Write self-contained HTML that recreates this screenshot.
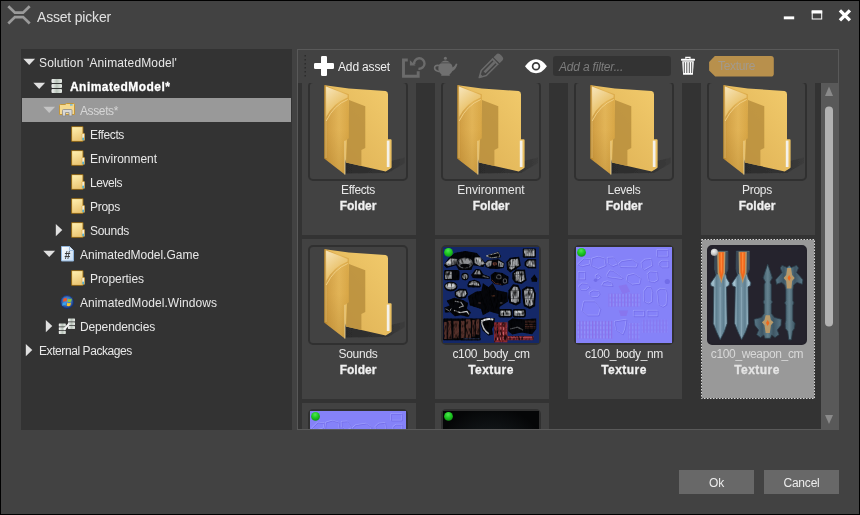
<!DOCTYPE html>
<html>
<head>
<meta charset="utf-8">
<title>Asset picker</title>
<style>
*{box-sizing:border-box;margin:0;padding:0}
html,body{width:860px;height:515px;overflow:hidden;background:#000}
body{font-family:"Liberation Sans",sans-serif;font-size:12px;color:#e6e6e6;position:relative}
.abs{position:absolute}
#win{position:absolute;left:0;top:0;width:860px;height:515px;background:#424242;border:1px solid #000}
#title{position:absolute;left:37px;top:8px;font-size:14px;line-height:18px;letter-spacing:-0.19px;color:#e0e0e0;white-space:pre}
#tree{position:absolute;left:21px;top:49px;width:271px;height:381px;background:#333}
.row{position:absolute;left:1px;width:269px;height:24px}
.row.sel{background:#999}
.row span{position:absolute;top:0;line-height:24px;white-space:pre;color:#e8e8e8}
.row svg{position:absolute}
#panel{position:absolute;left:297px;top:49px;width:542px;height:381px;background:#333;border:1px solid #595959;overflow:hidden}
#toolbar{position:absolute;left:0;top:0;width:540px;height:33px;background:#424242}
#grid{position:absolute;left:0;top:33px;width:523px;height:346px;overflow:hidden}
.tile{position:absolute;width:114px;height:160px;background:#424242}
.tile.sel{background:#999}
.tile.sel .frame{border-color:#24222b;background:#25232d}
.frame{position:absolute;left:6px;top:6px;width:100px;height:100px;border:2px solid #303030;border-radius:5px}
.frame svg{position:absolute;left:0;top:0}
.nm{position:absolute;left:-1px;width:114px;top:107px;text-align:center;line-height:16px;color:#e8e8e8;white-space:pre}
.ty{position:absolute;left:-1px;width:114px;top:123px;text-align:center;line-height:16px;font-weight:bold;color:#f0f0f0;white-space:pre;-webkit-text-stroke:0.3px #f0f0f0}
.tx{position:absolute;margin-top:1px;line-height:24px;white-space:pre;color:#e8e8e8}
.btn{position:absolute;top:470px;width:75px;height:24px;background:#686868;text-align:center;line-height:26px;font-size:12px;letter-spacing:-0.2px;color:#ececec}
</style>
</head>
<body>
<div id="root" style="position:absolute;left:0;top:0;width:860px;height:515px;will-change:transform">
<svg width="0" height="0" style="position:absolute">
<defs>
<linearGradient id="gFs" x1="0" y1="0" x2="0.3" y2="1"><stop offset="0" stop-color="#fff0b0"/><stop offset="1" stop-color="#ecc877"/></linearGradient>
<linearGradient id="gDb" x1="0" y1="0" x2="1" y2="0"><stop offset="0" stop-color="#f4f4f4"/><stop offset="0.5" stop-color="#b9c4ba"/><stop offset="1" stop-color="#e8ece8"/></linearGradient>
<radialGradient id="gWin" cx="0.5" cy="0.4" r="0.6"><stop offset="0" stop-color="#5aa0e8"/><stop offset="1" stop-color="#1a3c8c"/></radialGradient>
<linearGradient id="gCs" x1="0" y1="0" x2="1" y2="1"><stop offset="0" stop-color="#ffffff"/><stop offset="1" stop-color="#c4dcf4"/></linearGradient>
</defs>
<symbol id="fs" viewBox="0 0 14 16">
 <rect x="0.2" y="0.2" width="12.2" height="15.6" rx="0.8" fill="#a67616"/>
 <rect x="1.1" y="1.1" width="10.4" height="13.8" fill="url(#gFs)"/>
 <path d="M10.6 8.2Q10.8 7.2 12 7.2H13.2Q13.8 7.2 13.8 8V14.6H10.6Z" fill="#e2b85c"/>
 <rect x="11.5" y="8" width="1.3" height="4" fill="#fbfbf6"/>
 <rect x="11.5" y="11.6" width="1.3" height="2.6" fill="#2fb0f4"/>
</symbol>
<symbol id="db" viewBox="0 0 12 16">
 <rect x="0.5" y="1" width="10.5" height="4" rx="1" fill="url(#gDb)"/>
 <rect x="0.5" y="6" width="10.5" height="4" rx="1" fill="url(#gDb)"/>
 <rect x="0.5" y="11" width="10.5" height="4" rx="1" fill="url(#gDb)"/>
</symbol>
<symbol id="assets" viewBox="0 0 16 14">
 <path d="M0.5 2.5Q0.5 1.5 1.5 1.5H6L7.5 0.5H14.5Q15.5 0.5 15.5 1.5V11.5H0.5Z" fill="#f5d98f" stroke="#c2953a"/>
 <rect x="11" y="1.3" width="2.6" height="1.2" fill="#4db2f0"/>
 <path d="M3.5 13V7.5Q3.5 6.5 4.5 6.5H12Q13 6.5 13 7.5V13H10V9.5H6.5V13Z" fill="#d8d8d8" stroke="#8a8a8a" stroke-width="0.8"/>
</symbol>
<symbol id="cs" viewBox="0 0 13 16">
 <path d="M0.5 0.5H8.5L12.5 4.5V15H0.5Z" fill="url(#gCs)" stroke="#8fb4dc"/>
 <path d="M8.5 0.5V4.5H12.5" fill="#e8f2fc" stroke="#8fb4dc" stroke-width="0.8"/>
 <text x="6.3" y="12.6" font-family="Liberation Sans, sans-serif" font-size="10.5" font-weight="bold" text-anchor="middle" fill="#3c3c3c">#</text>
</symbol>
<symbol id="wglobe" viewBox="0 0 14 14">
 <circle cx="7" cy="7" r="6.7" fill="url(#gWin)"/>
 <circle cx="7" cy="7" r="6.4" fill="none" stroke="#12265e" stroke-width="0.7"/>
 <g transform="translate(7 7.2) scale(1.18) translate(-6.6 -7.3)">
 <path d="M3.6 4.4Q5.2 3.4 6.7 4.2L6.2 6.8Q4.7 6.1 3.1 7Z" fill="#f0582a"/>
 <path d="M7.5 4.4Q9 5.1 10.7 4.2L10.2 6.8Q8.6 7.6 7 6.9Z" fill="#8cc63e"/>
 <path d="M2.9 7.8Q4.5 6.9 6 7.6L5.5 10.2Q4 9.5 2.4 10.4Z" fill="#3aa0e8"/>
 <path d="M6.8 7.8Q8.4 8.5 10 7.6L9.5 10.2Q7.9 11 6.3 10.3Z" fill="#fcc42a"/>
 </g>
</symbol>
<symbol id="dep" viewBox="0 0 18 16">
 <g fill="url(#gDb)">
 <rect x="10" y="0.5" width="7" height="3" rx="0.6"/><rect x="10" y="4.2" width="7" height="3" rx="0.6"/><rect x="10" y="7.9" width="7" height="3" rx="0.6"/>
 <rect x="0.8" y="5.5" width="7" height="3" rx="0.6"/><rect x="0.8" y="9.2" width="7" height="3" rx="0.6"/><rect x="0.8" y="12.9" width="7" height="3" rx="0.6"/>
 </g>
 <path d="M6 11.5L11 6" stroke="#f4f4f4" stroke-width="2"/>
</symbol>
</defs>
</svg>
<svg width="0" height="0" style="position:absolute">
<defs>
<linearGradient id="gFlap" x1="0" y1="0" x2="1" y2="0"><stop offset="0" stop-color="#c08c32"/><stop offset="0.14" stop-color="#d6a448"/><stop offset="0.6" stop-color="#e6b85a"/><stop offset="1" stop-color="#dcaa48"/></linearGradient>
<linearGradient id="gFlapV" x1="0" y1="0" x2="0" y2="1"><stop offset="0" stop-color="#000" stop-opacity="0"/><stop offset="0.5" stop-color="#7a4a00" stop-opacity="0.04"/><stop offset="1" stop-color="#7a4a00" stop-opacity="0.22"/></linearGradient>
<linearGradient id="gBack" x1="0" y1="1" x2="1" y2="0"><stop offset="0" stop-color="#dcae52"/><stop offset="1" stop-color="#f2cb6c"/></linearGradient>
<linearGradient id="gGlare" x1="0" y1="0" x2="0.6" y2="1"><stop offset="0" stop-color="#f7e6bc"/><stop offset="0.6" stop-color="#ecc878"/><stop offset="1" stop-color="#e6ba5e"/></linearGradient>
<linearGradient id="gShadow" x1="0" y1="0" x2="1" y2="0"><stop offset="0" stop-color="#2c2c2c"/><stop offset="0.6" stop-color="#313131"/><stop offset="1" stop-color="#3c3c3c"/></linearGradient>
<filter id="bl1" x="-20%" y="-20%" width="140%" height="140%"><feGaussianBlur stdDeviation="0.6"/></filter>
</defs>
<symbol id="folder" viewBox="0 0 100 100" overflow="visible">
 <!-- ground shadow -->
 <path d="M38 82L83 80L97 76.5V82L80 92L38 92.5Z" fill="url(#gShadow)" filter="url(#bl1)"/>
 <!-- back -->
 <path d="M17 4.2L40.8 7.4L77.5 10Q80 10.5 80 13.2V58.3H82.6Q83.6 58.3 83.6 59.3V86.6L82.5 87.6L77.7 90.4L37.9 81.6Z" fill="url(#gBack)"/>
 <!-- flap shadow on back -->
 <path d="M41 19L57.3 25.2V67L53.4 68.9V85L38 81.6Z" fill="#b98f3e" opacity="0.85" filter="url(#bl1)"/>
 <!-- paper -->
 <path d="M78.8 59.6H81.5V86H78.8Z" fill="#f4f1ea"/>
 <!-- front flap -->
 <path d="M16.5 3.9L40.8 13.2V57.3L36.9 59.8V93.6L16.5 77.7Z" fill="url(#gFlap)"/>
 <path d="M16.5 3.9L40.8 13.2V57.3L36.9 59.8V93.6L16.5 77.7Z" fill="url(#gFlapV)"/>
 <path d="M18 5.6L39.6 13.9V16.5Q25 22 18.3 36Z" fill="url(#gGlare)"/>
 <path d="M39.8 18.5Q26 24 18.2 40" fill="none" stroke="#f0d189" stroke-width="0.9"/>
 <path d="M36.9 59.8V93.6" stroke="#f3dca0" stroke-width="0.8"/>
 <path d="M16.9 4.3V77.5" stroke="#c08f33" stroke-width="0.9"/>
 <path d="M18 5.5V77" stroke="#f3d99a" stroke-width="0.6" opacity="0.8"/>
</symbol>
</defs>
</svg>
<svg width="0" height="0" style="position:absolute">
<defs>
<pattern id="pStr" width="2.2" height="8" patternUnits="userSpaceOnUse"><rect width="2.2" height="8" fill="#77797c"/><rect width="1.1" height="8" fill="#b5b7ba"/><rect y="3" width="2.2" height="1" fill="#55575a" opacity="0.6"/></pattern>
<pattern id="pRed" width="3" height="5" patternUnits="userSpaceOnUse"><rect width="3" height="5" fill="#8c2a30"/><rect width="1" height="3" fill="#c06068"/><rect x="1.6" y="2.5" width="0.8" height="2.5" fill="#50141a"/></pattern>
<pattern id="pBrown" width="10" height="2.4" patternUnits="userSpaceOnUse"><rect width="10" height="2.4" fill="#0a0808"/><rect width="10" height="1.1" fill="#4e2a24"/></pattern>
<pattern id="pNm" width="3.2" height="4.6" patternUnits="userSpaceOnUse"><rect width="3.2" height="4.6" fill="#8582f8"/><rect width="1.2" height="4.6" fill="#8c6ee6"/><rect x="1.9" y="1" width="0.8" height="3" fill="#9ea0ff"/></pattern>
<radialGradient id="gGreen" cx="0.45" cy="0.3" r="0.75"><stop offset="0" stop-color="#52e452"/><stop offset="0.45" stop-color="#1fcc24"/><stop offset="1" stop-color="#0f8c12"/></radialGradient>
<radialGradient id="gGrey" cx="0.4" cy="0.35" r="0.7"><stop offset="0" stop-color="#f4f4f4"/><stop offset="0.6" stop-color="#c8c8c8"/><stop offset="1" stop-color="#8a8a8a"/></radialGradient>
<radialGradient id="gDarkTex" cx="0.5" cy="0.55" r="0.6"><stop offset="0" stop-color="#232a2d"/><stop offset="0.7" stop-color="#0d1012"/><stop offset="1" stop-color="#050607"/></radialGradient>
<linearGradient id="gBlade" x1="0" y1="0" x2="1" y2="0"><stop offset="0" stop-color="#88a8b8"/><stop offset="0.14" stop-color="#a4c2d0"/><stop offset="0.3" stop-color="#5f7f90"/><stop offset="0.5" stop-color="#7896a6"/><stop offset="0.7" stop-color="#5f7f90"/><stop offset="0.86" stop-color="#a4c2d0"/><stop offset="1" stop-color="#88a8b8"/></linearGradient>
<linearGradient id="gMace1" x1="0" y1="0" x2="1" y2="0"><stop offset="0" stop-color="#5a7888"/><stop offset="0.3" stop-color="#3e5664"/><stop offset="0.5" stop-color="#64828f"/><stop offset="0.7" stop-color="#3e5664"/><stop offset="1" stop-color="#5a7888"/></linearGradient>
<linearGradient id="gMace2" x1="0" y1="0" x2="1" y2="0"><stop offset="0" stop-color="#5a7888"/><stop offset="0.3" stop-color="#3e5664"/><stop offset="0.5" stop-color="#64828f"/><stop offset="0.7" stop-color="#3e5664"/><stop offset="1" stop-color="#5a7888"/></linearGradient>
<filter id="blW" x="-5%" y="-5%" width="110%" height="110%"><feGaussianBlur stdDeviation="0.4"/></filter>
<filter id="blT" x="0" y="0" width="100%" height="100%" color-interpolation-filters="sRGB"><feGaussianBlur in="SourceGraphic" stdDeviation="0.45" result="b"/><feTurbulence type="fractalNoise" baseFrequency="0.5 0.16" numOctaves="2" seed="7" result="n"/><feColorMatrix in="n" type="matrix" values="0 0 0 0 0  0 0 0 0 0  0 0 0 0 0  0 0 0 -2.6 1.45" result="na"/><feComposite in="na" in2="b" operator="in" result="nc"/><feMerge><feMergeNode in="b"/><feMergeNode in="nc"/></feMerge></filter>
<filter id="blN" x="-5%" y="-5%" width="110%" height="110%"><feGaussianBlur stdDeviation="0.35"/></filter>
</defs>
<symbol id="bodycm" viewBox="0 0 96 96"><rect width="96" height="96" fill="#142868"/>
 <g filter="url(#blT)">
 <path d="M0.9 18.3 L5.2 11.6 L11.6 6.0 L22.4 4.1 L33.9 6.0 L42.5 16.0 L40.3 20.1 L30.2 18.3 L28.3 23.1 L15.7 23.1 L13.0 18.3 L3.7 20.9Z" fill="#05060a" />
 <path d="M1.5 17.1 L7.5 11.2 L14.2 11.9 L13.4 17.1 L5.6 19.0Z" fill="#8d8f92" />
 <path d="M2.6 16.4 L7.8 11.9 L11.2 12.3 L7.5 16.8Z" fill="#c8cacc" />
 <ellipse cx="22.0" cy="16.0" rx="7.8" ry="5.6" fill="#5a5c60" />
 <ellipse cx="22.0" cy="14.5" rx="5.6" ry="3.0" fill="#8d8f92" />
 <ellipse cx="22.0" cy="18.6" rx="4.8" ry="1.9" fill="#05060a" />
 <path d="M31.3 10.4 L37.3 10.1 L41.8 16.8 L36.5 19.0 L31.7 16.0Z" fill="#8d8f92" />
 <path d="M33.6 11.2 L36.9 11.2 L39.9 16.4 L36.9 17.5Z" fill="#c8cacc" />
 <path d="M42.5 8.9 L55.5 4.5 L58.2 9.7 L55.9 11.2 L48.8 11.6Z" fill="#05060a" />
 <path d="M43.2 8.9 L55.2 5.6 L57.0 9.7 L48.8 10.8Z" fill="none" stroke="#c8cacc" stroke-width="0.7"/>
 <path d="M41.8 16.0 L44.7 13.0 L55.9 12.3 L61.5 16.0 L60.8 20.9 L54.1 22.0 L46.6 21.6 L42.5 20.1Z" fill="#05060a" />
 <path d="M42.5 16.4 L45.5 13.8 L48.8 13.8 L48.1 19.4 L44.0 19.8Z" fill="#8d8f92" />
 <path d="M55.2 13.4 L60.8 16.4 L60.0 20.1 L55.2 19.8Z" fill="#8d8f92" />
 <ellipse cx="51.8" cy="16.8" rx="2.2" ry="1.9" fill="#6a3a30" />
 <path d="M63.4 14.9 L67.1 10.8 L76.1 9.7 L77.9 18.6 L73.1 22.0 L67.1 25.4 L64.1 22.4Z" fill="#05060a" />
 <path d="M65.2 15.3 L68.2 12.3 L74.9 11.6 L76.1 18.3 L68.2 22.7 L66.0 20.9Z" fill="url(#pStr)" />
 <rect x="79.8" y="1.5" width="13.0" height="9.3" rx="1.1" fill="#05060a" />
 <rect x="80.9" y="2.6" width="10.8" height="6.7" rx="0.7" fill="url(#pStr)" />
 <path d="M81.6 14.9 L85.0 11.9 L93.2 12.3 L93.2 21.6 L85.0 21.3 L81.6 18.6Z" fill="#05060a" />
 <path d="M83.1 15.3 L85.7 13.4 L92.1 13.4 L92.1 20.1 L85.7 20.1 L83.1 18.3Z" fill="url(#pStr)" />
 <path d="M69.3 26.1 L73.1 22.4 L82.0 22.7 L83.5 33.6 L78.3 36.9 L71.6 35.4 L69.3 31.7Z" fill="#05060a" />
 <path d="M71.2 26.5 L73.8 24.2 L80.9 24.6 L81.6 32.8 L77.9 35.0 L72.7 33.9Z" fill="url(#pStr)" />
 <path d="M88.4 31.3 L91.3 27.6 L94.3 31.7 L93.9 34.7 L88.7 34.7Z" fill="#05060a" />
 <rect x="1.1" y="23.1" width="15.3" height="10.1" rx="1.5" fill="#05060a" />
 <rect x="2.2" y="24.6" width="6.7" height="7.5" rx="0.9" fill="url(#pStr)" />
 <ellipse cx="22.0" cy="29.5" rx="3.7" ry="3.7" fill="#05060a" />
 <ellipse cx="22.0" cy="29.5" rx="2.6" ry="2.6" fill="#8d8f92" />
 <path d="M28.0 28.0 L32.8 22.0 L37.3 22.4 L40.3 27.2 L47.0 29.8 L46.6 32.1 L29.8 30.9Z" fill="#05060a" />
 <path d="M30.9 27.2 L33.6 23.1 L36.5 23.5 L38.4 27.6Z" fill="#8d8f92" />
 <path d="M39.9 28.0 L45.9 30.2 L45.5 31.3 L39.5 29.8Z" fill="#5a5c60" />
 <path d="M47.7 28.0 L51.8 25.0 L59.3 26.1 L65.6 29.8 L65.2 36.5 L59.3 38.4 L51.4 36.9 L48.1 33.6Z" fill="#05060a" />
 <ellipse cx="55.9" cy="29.8" rx="3.0" ry="2.6" fill="#5a5c60" />
 <ellipse cx="61.9" cy="33.9" rx="2.2" ry="2.6" fill="#5a5c60" />
 <ellipse cx="55.9" cy="29.8" rx="1.7" ry="1.5" fill="#05060a" />
 <ellipse cx="61.9" cy="33.9" rx="1.3" ry="1.7" fill="#05060a" />
 <path d="M48.8 32.8 L52.2 36.5 L58.2 37.3" fill="none" stroke="#70382e" stroke-width="0.8"/>
 <path d="M24.2 38.0 L26.1 34.3 L31.3 32.8 L36.5 34.7 L38.0 39.1 L36.9 40.6 L25.0 40.3Z" fill="#05060a" />
 <path d="M25.7 38.0 L27.2 35.0 L31.3 33.9 L35.4 35.4 L36.5 38.8Z" fill="url(#pStr)" />
 <ellipse cx="7.8" cy="39.5" rx="6.7" ry="4.8" fill="#05060a" />
 <ellipse cx="7.8" cy="39.1" rx="5.6" ry="3.4" fill="#8d8f92" />
 <ellipse cx="7.5" cy="38.4" rx="4.1" ry="1.7" fill="#c8cacc" />
 <path d="M11.6 44.7 L16.0 41.8 L23.1 42.1 L25.0 46.6 L22.7 51.1 L15.7 51.8 L11.9 49.2Z" fill="#05060a" />
 <path d="M13.4 45.1 L16.8 43.2 L22.4 43.6 L23.5 46.6 L21.6 49.6 L16.0 50.0 L13.4 48.1Z" fill="url(#pStr)" />
 <path d="M39.9 36.2 L45.5 40.3 L49.6 36.2 L53.3 42.9 L64.5 45.5 L64.9 54.4 L56.3 60.0 L57.0 67.5 L46.6 64.5 L39.9 68.2 L38.0 61.9 L26.8 58.2 L25.0 49.2 L32.8 44.7 L38.4 44.0Z" fill="#05060a" />
 <ellipse cx="50.3" cy="48.8" rx="1.9" ry="0.9" fill="#4a2a1e" />
 <ellipse cx="36.5" cy="55.9" rx="1.5" ry="0.9" fill="#3a2a2a" />
 <ellipse cx="58.2" cy="55.9" rx="1.5" ry="0.9" fill="#3a3a44" />
 <path d="M65.6 43.2 L70.1 37.3 L75.3 38.0 L77.9 44.0 L77.5 55.9 L73.1 58.5 L66.4 55.9 L64.9 50.0Z" fill="#05060a" />
 <path d="M67.5 44.0 L70.8 39.5 L74.6 39.9 L76.1 44.7 L75.7 54.4 L72.3 56.3 L67.9 54.4Z" fill="url(#pStr)" />
 <path d="M79.0 42.5 L83.5 39.5 L90.6 40.3 L92.8 46.6 L92.1 59.3 L86.9 61.9 L80.9 59.3 L79.4 50.3Z" fill="#05060a" />
 <path d="M80.9 43.6 L84.3 41.4 L89.5 42.1 L91.0 47.0 L90.2 57.4 L86.5 59.7 L82.4 57.4Z" fill="url(#pStr)" />
 <rect x="55.5" y="61.9" width="13.8" height="8.6" rx="1.9" fill="#05060a" />
 <rect x="57.4" y="63.4" width="10.4" height="5.6" rx="1.1" fill="#8d8f92" />
 <rect x="58.5" y="64.1" width="8.2" height="1.9" rx="0.7" fill="#c8cacc" />
 <rect x="69.7" y="61.9" width="13.0" height="8.6" rx="1.9" fill="#05060a" />
 <rect x="71.2" y="63.4" width="10.1" height="5.6" rx="1.1" fill="#8d8f92" />
 <rect x="72.3" y="64.1" width="7.8" height="1.9" rx="0.7" fill="#c8cacc" />
 <path d="M3.7 53.7 L11.2 50.7 L20.5 53.3 L25.0 55.9 L23.9 61.5 L28.0 65.6 L25.4 70.1 L17.9 68.2 L11.9 69.3 L7.5 65.2 L1.9 65.6 L1.5 60.4 L6.7 58.5Z" fill="#05060a" />
 <path d="M11.6 54.1 L17.9 55.2 L20.5 58.9 L15.7 60.8" fill="none" stroke="#8d8f92" stroke-width="1.2"/>
 <path d="M10.8 63.4 L17.1 65.6 L23.9 64.5 L26.1 67.5" fill="none" stroke="#c8cacc" stroke-width="1.2"/>
 <path d="M2.6 61.9 L6.7 64.1 L8.2 61.5" fill="none" stroke="#8d8f92" stroke-width="1"/>
 <rect x="0.4" y="71.6" width="36.9" height="21.6" rx="0.6" fill="#05060a" />
 <rect x="1.1" y="74.9" width="2.6" height="17.1" rx="0.0" fill="#54302a" />
 <rect x="4.8" y="73.8" width="3.7" height="18.3" rx="0.0" fill="#54302a" />
 <rect x="10.4" y="73.8" width="5.6" height="17.5" rx="0.0" fill="#54302a" />
 <rect x="17.9" y="73.8" width="3.7" height="17.5" rx="0.0" fill="#54302a" />
 <rect x="22.7" y="72.3" width="5.2" height="18.6" rx="0.0" fill="#54302a" />
 <rect x="29.1" y="73.1" width="2.6" height="16.4" rx="0.0" fill="#54302a" />
 <rect x="32.8" y="72.3" width="3.4" height="15.3" rx="0.0" fill="#54302a" />
 <rect x="18.6" y="91.0" width="19.0" height="2.2" rx="0.0" fill="#05060a" />
 <rect x="20.5" y="91.5" width="16.0" height="0.7" rx="0.0" fill="#3a4a7a" />
 <path d="M36.9 71.6 L42.9 70.5 L51.8 71.2 L51.4 78.3 L48.8 82.0 L50.0 87.6 L45.5 88.4 L39.5 83.5 L37.3 76.8Z" fill="#05060a" />
 <path d="M38.4 74.2 Q44.7 70.8 50.3 72.7" fill="none" stroke="#e4e6e8" stroke-width="1.8"/>
 <path d="M38.8 74.6 Q39.1 82.0 45.9 86.9" fill="none" stroke="#b9bcc0" stroke-width="1.5"/>
 <rect x="51.1" y="75.3" width="13.4" height="20.1" rx="0.0" fill="#8c2a30" />
 <rect x="52.2" y="76.4" width="11.2" height="16.8" rx="0.0" fill="url(#pRed)" />
 <path d="M65.2 74.2 L69.3 71.6 L82.0 72.3 L93.2 71.6 L93.2 82.0 L89.1 87.2 L78.3 85.4 L69.3 87.6 L65.2 83.9Z" fill="#05060a" />
 <rect x="82.0" y="73.1" width="10.4" height="8.9" rx="0.0" fill="url(#pBrown)" />
 <path d="M67.1 82.0 L74.6 80.2 L80.2 83.1" fill="none" stroke="#5a5c60" stroke-width="1.2"/>
 <rect x="63.4" y="89.1" width="27.2" height="4.1" rx="0.6" fill="#7c2630" />
 <rect x="64.5" y="90.2" width="25.0" height="0.9" rx="0.4" fill="#b45058" />
 </g>
 <circle cx="5.5" cy="5.4" r="4.4" fill="url(#gGreen)"/>
</symbol>
<symbol id="bodynm" viewBox="0 0 96 96"><rect width="96" height="96" fill="#8582f8"/>
 <g filter="url(#blN)" opacity="0.95">
 <path d="M1.5 17.1 L7.5 11.2 L14.2 11.9 L13.4 17.1 L5.6 19.0Z" fill="#8683fa" stroke="#a4a6ff" stroke-width="0.8"/>
 <path d="M1.5 17.1 L7.5 11.2 L14.2 11.9 L13.4 17.1 L5.6 19.0Z" fill="none" stroke="#6a62e2" stroke-width="0.6" transform="translate(0.6,0.7)"/>
 <path d="M15.7 11.2 L22.0 9.3 L28.3 11.2 L29.5 18.6 L22.0 21.6 L14.9 18.6Z" fill="#8683fa" stroke="#a4a6ff" stroke-width="0.8"/>
 <path d="M15.7 11.2 L22.0 9.3 L28.3 11.2 L29.5 18.6 L22.0 21.6 L14.9 18.6Z" fill="none" stroke="#6a62e2" stroke-width="0.6" transform="translate(0.6,0.7)"/>
 <path d="M31.3 10.4 L37.3 10.1 L41.8 16.8 L36.5 19.0 L31.7 16.0Z" fill="#8683fa" stroke="#a4a6ff" stroke-width="0.8"/>
 <path d="M31.3 10.4 L37.3 10.1 L41.8 16.8 L36.5 19.0 L31.7 16.0Z" fill="none" stroke="#6a62e2" stroke-width="0.6" transform="translate(0.6,0.7)"/>
 <path d="M42.5 16.4 L45.5 13.8 L55.9 12.3 L61.5 16.0 L60.0 20.1 L44.0 19.8Z" fill="#8683fa" stroke="#a4a6ff" stroke-width="0.8"/>
 <path d="M42.5 16.4 L45.5 13.8 L55.9 12.3 L61.5 16.0 L60.0 20.1 L44.0 19.8Z" fill="none" stroke="#6a62e2" stroke-width="0.6" transform="translate(0.6,0.7)"/>
 <path d="M65.2 15.3 L68.2 12.3 L74.9 11.6 L76.1 18.3 L68.2 22.7 L66.0 20.9Z" fill="#8683fa" stroke="#a4a6ff" stroke-width="0.8"/>
 <path d="M65.2 15.3 L68.2 12.3 L74.9 11.6 L76.1 18.3 L68.2 22.7 L66.0 20.9Z" fill="none" stroke="#6a62e2" stroke-width="0.6" transform="translate(0.6,0.7)"/>
 <path d="M80.9 2.6 L91.7 2.6 L91.7 9.3 L80.9 9.3Z" fill="#8683fa" stroke="#a4a6ff" stroke-width="0.8"/>
 <path d="M80.9 2.6 L91.7 2.6 L91.7 9.3 L80.9 9.3Z" fill="none" stroke="#6a62e2" stroke-width="0.6" transform="translate(0.6,0.7)"/>
 <path d="M83.1 15.3 L85.7 13.4 L92.1 13.4 L92.1 20.1 L85.7 20.1 L83.1 18.3Z" fill="#8683fa" stroke="#a4a6ff" stroke-width="0.8"/>
 <path d="M83.1 15.3 L85.7 13.4 L92.1 13.4 L92.1 20.1 L85.7 20.1 L83.1 18.3Z" fill="none" stroke="#6a62e2" stroke-width="0.6" transform="translate(0.6,0.7)"/>
 <path d="M71.2 26.5 L73.8 24.2 L80.9 24.6 L81.6 32.8 L77.9 35.0 L72.7 33.9Z" fill="#8683fa" stroke="#a4a6ff" stroke-width="0.8"/>
 <path d="M71.2 26.5 L73.8 24.2 L80.9 24.6 L81.6 32.8 L77.9 35.0 L72.7 33.9Z" fill="none" stroke="#6a62e2" stroke-width="0.6" transform="translate(0.6,0.7)"/>
 <path d="M2.2 24.6 L8.9 24.6 L8.9 32.1 L2.2 32.1Z" fill="#8683fa" stroke="#a4a6ff" stroke-width="0.8"/>
 <path d="M2.2 24.6 L8.9 24.6 L8.9 32.1 L2.2 32.1Z" fill="none" stroke="#6a62e2" stroke-width="0.6" transform="translate(0.6,0.7)"/>
 <path d="M19.4 28.0 L22.0 26.8 L24.6 29.5 L22.0 32.1 L19.4 30.9Z" fill="#8683fa" stroke="#a4a6ff" stroke-width="0.8"/>
 <path d="M19.4 28.0 L22.0 26.8 L24.6 29.5 L22.0 32.1 L19.4 30.9Z" fill="none" stroke="#6a62e2" stroke-width="0.6" transform="translate(0.6,0.7)"/>
 <path d="M30.9 27.2 L33.6 23.1 L36.5 23.5 L46.6 30.6 L45.5 31.7 L31.3 29.8Z" fill="#8683fa" stroke="#a4a6ff" stroke-width="0.8"/>
 <path d="M30.9 27.2 L33.6 23.1 L36.5 23.5 L46.6 30.6 L45.5 31.7 L31.3 29.8Z" fill="none" stroke="#6a62e2" stroke-width="0.6" transform="translate(0.6,0.7)"/>
 <path d="M51.4 28.0 L57.8 26.5 L64.5 30.9 L63.4 36.5 L55.9 37.3 L50.3 33.6Z" fill="#8683fa" stroke="#a4a6ff" stroke-width="0.8"/>
 <path d="M51.4 28.0 L57.8 26.5 L64.5 30.9 L63.4 36.5 L55.9 37.3 L50.3 33.6Z" fill="none" stroke="#6a62e2" stroke-width="0.6" transform="translate(0.6,0.7)"/>
 <path d="M25.7 38.0 L27.2 35.0 L31.3 33.9 L35.4 35.4 L36.5 38.8Z" fill="#8683fa" stroke="#a4a6ff" stroke-width="0.8"/>
 <path d="M25.7 38.0 L27.2 35.0 L31.3 33.9 L35.4 35.4 L36.5 38.8Z" fill="none" stroke="#6a62e2" stroke-width="0.6" transform="translate(0.6,0.7)"/>
 <path d="M2.2 39.1 L5.6 36.2 L11.2 36.5 L13.4 39.5 L10.4 42.5 L4.5 42.5Z" fill="#8683fa" stroke="#a4a6ff" stroke-width="0.8"/>
 <path d="M2.2 39.1 L5.6 36.2 L11.2 36.5 L13.4 39.5 L10.4 42.5 L4.5 42.5Z" fill="none" stroke="#6a62e2" stroke-width="0.6" transform="translate(0.6,0.7)"/>
 <path d="M13.4 45.1 L16.8 43.2 L22.4 43.6 L23.5 46.6 L21.6 49.6 L16.0 50.0 L13.4 48.1Z" fill="#8683fa" stroke="#a4a6ff" stroke-width="0.8"/>
 <path d="M13.4 45.1 L16.8 43.2 L22.4 43.6 L23.5 46.6 L21.6 49.6 L16.0 50.0 L13.4 48.1Z" fill="none" stroke="#6a62e2" stroke-width="0.6" transform="translate(0.6,0.7)"/>
 <path d="M67.5 44.0 L70.8 39.5 L74.6 39.9 L76.1 44.7 L75.7 54.4 L72.3 56.3 L67.9 54.4Z" fill="#8683fa" stroke="#a4a6ff" stroke-width="0.8"/>
 <path d="M67.5 44.0 L70.8 39.5 L74.6 39.9 L76.1 44.7 L75.7 54.4 L72.3 56.3 L67.9 54.4Z" fill="none" stroke="#6a62e2" stroke-width="0.6" transform="translate(0.6,0.7)"/>
 <path d="M80.9 43.6 L84.3 41.4 L89.5 42.1 L91.0 47.0 L90.2 57.4 L86.5 59.7 L82.4 57.4Z" fill="#8683fa" stroke="#a4a6ff" stroke-width="0.8"/>
 <path d="M80.9 43.6 L84.3 41.4 L89.5 42.1 L91.0 47.0 L90.2 57.4 L86.5 59.7 L82.4 57.4Z" fill="none" stroke="#6a62e2" stroke-width="0.6" transform="translate(0.6,0.7)"/>
 <path d="M57.4 63.4 L67.9 63.4 L67.9 69.0 L57.4 69.0Z" fill="#8683fa" stroke="#a4a6ff" stroke-width="0.8"/>
 <path d="M57.4 63.4 L67.9 63.4 L67.9 69.0 L57.4 69.0Z" fill="none" stroke="#6a62e2" stroke-width="0.6" transform="translate(0.6,0.7)"/>
 <path d="M71.2 63.4 L81.3 63.4 L81.3 69.0 L71.2 69.0Z" fill="#8683fa" stroke="#a4a6ff" stroke-width="0.8"/>
 <path d="M71.2 63.4 L81.3 63.4 L81.3 69.0 L71.2 69.0Z" fill="none" stroke="#6a62e2" stroke-width="0.6" transform="translate(0.6,0.7)"/>
 <path d="M38.4 74.2 L50.3 72.3 L48.8 82.0 L46.6 87.2 L39.9 82.8Z" fill="#8683fa" stroke="#a4a6ff" stroke-width="0.8"/>
 <path d="M38.4 74.2 L50.3 72.3 L48.8 82.0 L46.6 87.2 L39.9 82.8Z" fill="none" stroke="#6a62e2" stroke-width="0.6" transform="translate(0.6,0.7)"/>
 <path d="M7.5 54.1 L18.6 54.1 L24.2 61.5 L22.4 68.2 L11.2 68.2 L5.6 63.4Z" fill="#8683fa" stroke="#a4a6ff" stroke-width="0.8"/>
 <path d="M7.5 54.1 L18.6 54.1 L24.2 61.5 L22.4 68.2 L11.2 68.2 L5.6 63.4Z" fill="none" stroke="#6a62e2" stroke-width="0.6" transform="translate(0.6,0.7)"/>
 <path d="M32.6 46.6 L64.3 46.6 L64.3 59.7 L32.6 59.7Z" fill="url(#pNm)" opacity="0.8"/>
 <path d="M42.5 39.1 L50.3 37.3 L54.1 44.7 L46.6 47.0Z" fill="#8a6ce6" opacity="0.6"/>
 <path d="M42.9 63.4 L52.2 63.4 L50.3 69.0 L44.7 69.0Z" fill="#8a6ce6" opacity="0.6"/>
 <rect x="1.1" y="73.8" width="35.4" height="17.9" fill="url(#pNm)" opacity="0.9"/>
 <rect x="52.2" y="76.1" width="11.6" height="17.1" fill="url(#pNm)" opacity="0.7"/>
 <rect x="65.6" y="72.7" width="26.1" height="13.0" fill="url(#pNm)" opacity="0.5"/>
 <circle cx="91.3" cy="34.5" r="2.6" fill="#6a62e0" opacity="0.7"/>
 <circle cx="19.6" cy="33.2" r="1.8" fill="#6a62e0" opacity="0.7"/>
 </g>
 <circle cx="5.5" cy="5.4" r="4.4" fill="url(#gGreen)"/>
</symbol>
<symbol id="dark" viewBox="0 0 96 96"><rect width="96" height="96" fill="url(#gDarkTex)"/>
 <circle cx="5.5" cy="5.4" r="4.4" fill="url(#gGreen)"/>
</symbol>
<symbol id="weapon" viewBox="0 0 96 96"><rect width="96" height="96" rx="3" fill="#25232d"/>
 <g filter="url(#blW)">
  <path d="M6.0 4.1 L19.0 4.1 L19.0 22.0 L16.8 27.2 L17.9 31.7 L20.5 35.8 L20.1 38.4 L17.5 39.9 L18.1 76.4 L15.3 84.8 L11.2 92.8 L7.5 84.8 L4.3 76.4 L4.8 39.9 L1.9 38.8 L1.5 36.2 L4.5 32.1 L7.1 28.0 L5.6 22.0Z" fill="url(#gBlade)" stroke="#2e4452" stroke-width="0.8"/>
 <path d="M11.2 40.1 L11.2 89.5" stroke="#9fc0cf" stroke-width="0.7" opacity="0.6"/>
 <path d="M6.0 4.5 L19.0 4.5 L19.0 22.7 L17.1 27.2 L7.5 27.2 L5.6 22.7Z" fill="#343e4a" opacity="0.85"/>
 <path d="M8.2 4.8 L16.4 4.8 L16.0 26.1 L13.8 31.7 L12.3 36.5 L10.8 31.7 L8.6 26.1Z" fill="#b89868"/>
 <path d="M9.7 5.2 L14.9 5.2 L14.5 25.2 L12.3 33.2 L10.1 25.2Z" fill="#f0671c"/>
 <path d="M11.6 5.6 L13.0 5.6 L12.9 22.4 L12.3 28.0 L11.7 22.4Z" fill="#ff8a3a"/>
 <path d="M27.4 4.1 L40.5 4.1 L40.5 22.0 L38.2 27.2 L39.3 31.7 L41.9 35.8 L41.6 38.4 L39.0 39.9 L39.5 76.4 L36.7 84.8 L32.6 92.8 L28.9 84.8 L25.7 76.4 L26.3 39.9 L23.3 38.8 L22.9 36.2 L25.9 32.1 L28.5 28.0 L27.0 22.0Z" fill="url(#gBlade)" stroke="#2e4452" stroke-width="0.8"/>
 <path d="M32.6 40.1 L32.6 89.5" stroke="#9fc0cf" stroke-width="0.7" opacity="0.6"/>
 <path d="M27.4 4.5 L40.5 4.5 L40.5 22.7 L38.6 27.2 L28.9 27.2 L27.0 22.7Z" fill="#343e4a" opacity="0.85"/>
 <path d="M29.6 4.8 L37.8 4.8 L37.5 26.1 L35.2 31.7 L33.7 36.5 L32.2 31.7 L30.0 26.1Z" fill="#b89868"/>
 <path d="M31.1 5.2 L36.3 5.2 L36.0 25.2 L33.7 33.2 L31.5 25.2Z" fill="#f0671c"/>
 <path d="M33.0 5.6 L34.5 5.6 L34.3 22.4 L33.7 28.0 L33.2 22.4Z" fill="#ff8a3a"/>
 <path d="M58.7 17.1 L61.1 23.9 L63.4 30.9 L61.1 35.0 L62.3 37.7 L62.3 52.8 L63.4 55.0 L62.3 57.2 L62.3 66.4 L65.6 70.5 L72.3 72.3 L72.0 78.3 L68.2 83.1 L70.1 87.6 L66.0 90.6 L62.6 88.0 L61.5 91.3 L55.9 91.3 L54.8 88.0 L51.4 90.6 L47.7 87.6 L49.6 83.1 L45.9 78.3 L45.1 72.3 L52.2 70.5 L55.2 66.4 L55.2 57.2 L54.1 55.0 L55.2 52.8 L55.2 37.7 L56.3 35.0 L54.1 30.9 L56.3 23.9Z" fill="url(#gMace1)" stroke="#2a3c48" stroke-width="0.8"/>
 <path d="M56.7 68.2 L60.8 68.2 L61.9 73.1 L64.5 75.3 L61.9 78.3 L60.8 86.1 L56.7 86.1 L55.5 78.3 L52.9 75.3 L55.5 73.1Z" fill="#b99a6a"/>
 <path d="M58.7 73.1 L60.4 76.1 L58.7 79.0 L57.0 76.1Z" fill="#f0671c"/>
 <path d="M73.1 18.3 L77.9 20.5 L80.2 18.6 L82.4 20.5 L87.6 18.3 L89.5 20.9 L87.6 25.4 L93.9 32.8 L93.2 37.3 L88.0 35.4 L84.6 38.0 L83.9 42.5 L83.9 53.7 L85.0 55.9 L83.9 58.2 L83.9 73.4 L86.1 76.4 L85.4 81.6 L83.5 84.3 L82.4 92.8 L79.8 92.8 L78.7 84.3 L76.4 81.6 L76.1 76.4 L76.8 73.4 L76.8 58.2 L75.7 55.9 L76.8 53.7 L76.8 42.5 L75.7 38.0 L72.7 35.4 L67.5 37.3 L66.7 32.8 L73.1 25.4 L71.2 20.9Z" fill="url(#gMace2)" stroke="#2a3c48" stroke-width="0.8"/>
 <path d="M78.3 20.9 L82.0 20.9 L83.1 28.0 L85.7 30.9 L83.1 33.9 L82.4 41.4 L77.9 41.4 L77.2 33.9 L74.6 30.9 L77.2 28.0Z" fill="#b99a6a"/>
 <path d="M80.2 28.0 L81.8 30.9 L80.2 33.9 L78.5 30.9Z" fill="#f0671c"/>
 </g>
 <circle cx="5.4" cy="5.4" r="3.6" fill="url(#gGrey)"/>
</symbol>
</defs>
</svg>

<div id="win"></div>
<!-- title bar -->
<svg class="abs" style="left:7px;top:5px" width="24" height="20" viewBox="0 0 24 20"><path d="M1.3 1.3 L7.9 7.7 L16.1 7.7 L22.7 1.3 M1.3 18.5 L7.9 12.1 L16.1 12.1 L22.7 18.5" fill="none" stroke="#9a9a9a" stroke-width="2.7" stroke-linejoin="miter"/></svg>
<div id="title">Asset picker</div>
<svg class="abs" style="left:780px;top:6px" width="76" height="18" viewBox="0 0 76 18">
<rect x="3.8" y="10.4" width="10.4" height="2.9" fill="#fff"/>
<rect x="32.2" y="5" width="9.5" height="8" fill="none" stroke="#fff" stroke-width="1"/><rect x="31.7" y="4.5" width="10.5" height="3" fill="#fff"/>
<path d="M59.9 4.3 L69.9 14.3 M69.9 4.3 L59.9 14.3" stroke="#fff" stroke-width="3.3"/>
</svg>

<div id="tree"></div>
<svg class="abs" style="left:23px;top:58px" width="13" height="8" viewBox="0 0 13 8"><path d="M0.3 0.7H12.1L6.2 7.1Z" fill="#e0e0e0"/></svg>
<div class="tx" style="left:39px;top:50px;letter-spacing:0.14px">Solution 'AnimatedModel'</div>
<svg class="abs" style="left:33px;top:82px" width="13" height="8" viewBox="0 0 13 8"><path d="M0.3 0.7H12.1L6.2 7.1Z" fill="#e0e0e0"/></svg>
<svg class="abs" style="left:51px;top:78px" width="12" height="16"><use href="#db"/></svg>
<div class="tx" style="left:70px;top:74px;font-weight:bold;letter-spacing:0.45px;color:#fff;-webkit-text-stroke:0.3px #fff">AnimatedModel*</div>
<div class="abs" style="left:22px;top:98px;width:269px;height:24px;background:#999"></div>
<svg class="abs" style="left:43px;top:106px" width="13" height="8" viewBox="0 0 13 8"><path d="M0.3 0.7H12.1L6.2 7.1Z" fill="#c4c4c4"/></svg>
<svg class="abs" style="left:59px;top:103px" width="16" height="14"><use href="#assets"/></svg>
<div class="tx" style="left:80px;top:98px;letter-spacing:-0.38px;color:#d6d6d6">Assets*</div>
<svg class="abs" style="left:71px;top:126px" width="14" height="16"><use href="#fs"/></svg>
<div class="tx" style="left:90px;top:122px;letter-spacing:-0.35px">Effects</div>
<svg class="abs" style="left:71px;top:150px" width="14" height="16"><use href="#fs"/></svg>
<div class="tx" style="left:90px;top:146px;letter-spacing:-0.03px">Environment</div>
<svg class="abs" style="left:71px;top:174px" width="14" height="16"><use href="#fs"/></svg>
<div class="tx" style="left:90px;top:170px;letter-spacing:-0.45px">Levels</div>
<svg class="abs" style="left:71px;top:198px" width="14" height="16"><use href="#fs"/></svg>
<div class="tx" style="left:90px;top:194px;letter-spacing:-0.3px">Props</div>
<svg class="abs" style="left:55px;top:223px" width="9" height="14" viewBox="0 0 9 14"><path d="M0.8 0.9L7.3 7.1L0.8 13.3Z" fill="#e0e0e0"/></svg>
<svg class="abs" style="left:71px;top:222px" width="14" height="16"><use href="#fs"/></svg>
<div class="tx" style="left:90px;top:218px;letter-spacing:-0.28px">Sounds</div>
<svg class="abs" style="left:43px;top:250px" width="13" height="8" viewBox="0 0 13 8"><path d="M0.3 0.7H12.1L6.2 7.1Z" fill="#e0e0e0"/></svg>
<svg class="abs" style="left:61px;top:246px" width="13" height="16"><use href="#cs"/></svg>
<div class="tx" style="left:80px;top:242px;letter-spacing:-0.02px">AnimatedModel.Game</div>
<svg class="abs" style="left:71px;top:270px" width="14" height="16"><use href="#fs"/></svg>
<div class="tx" style="left:90px;top:266px;letter-spacing:-0.07px">Properties</div>
<svg class="abs" style="left:60px;top:295px" width="14" height="14"><use href="#wglobe"/></svg>
<div class="tx" style="left:80px;top:290px;letter-spacing:0.08px">AnimatedModel.Windows</div>
<svg class="abs" style="left:45px;top:319px" width="9" height="14" viewBox="0 0 9 14"><path d="M0.8 0.9L7.3 7.1L0.8 13.3Z" fill="#e0e0e0"/></svg>
<svg class="abs" style="left:58px;top:318px" width="18" height="16"><use href="#dep"/></svg>
<div class="tx" style="left:80px;top:314px;letter-spacing:-0.14px">Dependencies</div>
<svg class="abs" style="left:25px;top:343px" width="9" height="14" viewBox="0 0 9 14"><path d="M0.8 0.9L7.3 7.1L0.8 13.3Z" fill="#e0e0e0"/></svg>
<div class="tx" style="left:39px;top:338px;letter-spacing:-0.42px">External Packages</div>
<div id="panel">
 <div id="grid">
<!-- row 1 -->
<div class="tile" style="left:4px;top:-8px"><div class="frame"><svg width="96" height="96" viewBox="2 2 96 96"><use href="#folder" width="100" height="100"/></svg></div><div class="nm" style="letter-spacing:-0.35px">Effects</div><div class="ty">Folder</div></div>
<div class="tile" style="left:137px;top:-8px"><div class="frame"><svg width="96" height="96" viewBox="2 2 96 96"><use href="#folder" width="100" height="100"/></svg></div><div class="nm">Environment</div><div class="ty">Folder</div></div>
<div class="tile" style="left:270px;top:-8px"><div class="frame"><svg width="96" height="96" viewBox="2 2 96 96"><use href="#folder" width="100" height="100"/></svg></div><div class="nm" style="letter-spacing:-0.3px">Levels</div><div class="ty">Folder</div></div>
<div class="tile" style="left:403px;top:-8px"><div class="frame"><svg width="96" height="96" viewBox="2 2 96 96"><use href="#folder" width="100" height="100"/></svg></div><div class="nm" style="letter-spacing:-0.3px">Props</div><div class="ty">Folder</div></div>
<!-- row 2 -->
<div class="tile" style="left:4px;top:156px"><div class="frame"><svg width="96" height="96" viewBox="2 2 96 96"><use href="#folder" width="100" height="100"/></svg></div><div class="nm" style="letter-spacing:-0.28px">Sounds</div><div class="ty">Folder</div></div>
<div class="tile" style="left:137px;top:156px"><div class="frame"><svg width="96" height="96" viewBox="0 0 96 96"><use href="#bodycm"/></svg></div><div class="nm" style="letter-spacing:-0.35px">c100_body_cm</div><div class="ty" style="letter-spacing:0.45px">Texture</div></div>
<div class="tile" style="left:270px;top:156px"><div class="frame"><svg width="96" height="96" viewBox="0 0 96 96"><use href="#bodynm"/></svg></div><div class="nm" style="letter-spacing:-0.33px">c100_body_nm</div><div class="ty" style="letter-spacing:0.45px">Texture</div></div>
<div class="tile sel" style="left:403px;top:156px"><div class="frame"><svg width="96" height="96" viewBox="0 0 96 96"><use href="#weapon"/></svg></div><div class="nm" style="color:#d8d8d8;letter-spacing:-0.36px">c100_weapon_cm</div><div class="ty" style="color:#e4e4e4;letter-spacing:0.45px;-webkit-text-stroke-color:#e4e4e4">Texture</div><svg class="abs" style="left:0;top:0" width="114" height="160"><rect x="0.5" y="0.5" width="113" height="159" fill="none" stroke="#3c3c3c" stroke-width="1"/><rect x="0.5" y="0.5" width="113" height="159" fill="none" stroke="#d4d4d4" stroke-width="1" stroke-dasharray="1.5 1.5"/></svg></div>
<!-- row 3 -->
<div class="tile" style="left:4px;top:320px"><div class="frame"><svg width="96" height="96" viewBox="0 0 96 96"><use href="#bodynm"/></svg></div></div>
<div class="tile" style="left:137px;top:320px"><div class="frame"><svg width="96" height="96" viewBox="0 0 96 96"><use href="#dark"/></svg></div></div>
<!-- scrollbar -->

 </div>
 <div id="toolbar"></div>
</div>

<!-- scrollbar -->
<div class="abs" style="left:821px;top:83px;width:17px;height:346px;background:#595959"></div>
<svg class="abs" style="left:821px;top:83px" width="18" height="346" viewBox="0 0 18 346">
 <path d="M8 3.6L12 13H4Z" fill="#8a8a8a"/>
 <path d="M8 341L12 332H4Z" fill="#8a8a8a"/>
 <rect x="4" y="23.6" width="8" height="220" rx="4" fill="#b2b2b2"/>
</svg>
<!-- grip -->
<svg class="abs" style="left:304px;top:54px" width="3" height="24" viewBox="0 0 3 24"><path d="M1.2 1V23" stroke="#2b2b2b" stroke-width="1.4" stroke-dasharray="1.6 2.4"/></svg>
<!-- plus -->
<svg class="abs" style="left:314px;top:56px" width="20" height="20" viewBox="0 0 20 20"><rect x="0" y="7" width="20" height="6" rx="1.3" fill="#fff"/><rect x="7" y="0" width="6" height="20" rx="1.3" fill="#fff"/></svg>
<div class="tx" style="left:338px;top:54px;letter-spacing:-0.15px;color:#f0f0f0">Add asset</div>
<!-- export / reimport -->
<svg class="abs" style="left:400px;top:54px" width="28" height="26" viewBox="0 0 28 26">
 <path d="M7.8 6H3.5V22.2H18.2V17.3" fill="none" stroke="#6b6b6b" stroke-width="2.9"/>
 <path d="M14.2 10.4A5.2 5.2 0 1 1 18.4 14.6" fill="none" stroke="#6b6b6b" stroke-width="2.4"/>
 <path d="M9.9 6.3V11.6H15.6Z" fill="#6b6b6b"/>
</svg>
<!-- teapot -->
<svg class="abs" style="left:432px;top:55px" width="28" height="24" viewBox="0 0 28 24">
 <g fill="#707070">
 <circle cx="13.4" cy="3.2" r="1.5"/>
 <path d="M8.8 7.6Q13.4 3.2 18 7.6Z"/>
 <path d="M6.4 12.5Q6.6 8.3 10 8.3H17Q20 8.3 20.6 12.5Q22.5 12 24 8.6L25.4 9Q24.5 14 20.2 16.2Q19 18.5 17.6 19.2L17.8 20.8H9.2L9.4 19.2Q7.4 17.8 6.6 15.5Q6.3 14 6.4 12.5Z"/>
 </g>
 <path d="M7 10.5Q2.6 9.8 2.6 13Q2.8 16 7.6 16.6" fill="none" stroke="#707070" stroke-width="1.7"/>
</svg>
<!-- pencil -->
<svg class="abs" style="left:477px;top:52px" width="28" height="28" viewBox="0 0 28 28">
 <g transform="translate(2.2,25.6) rotate(-45)">
  <path d="M0 0L6.5 -3.6H22.5V3.6H6.5Z" fill="none" stroke="#6b6b6b" stroke-width="1.5" stroke-linejoin="round"/>
  <path d="M0 0L3.4 -1.9V1.9Z" fill="#6b6b6b"/>
  <path d="M7.5 0H22" stroke="#6b6b6b" stroke-width="2.6"/>
  <path d="M24.6 -4.3H28.5Q31.4 -4.3 31.4 0Q31.4 4.3 28.5 4.3H24.6Z" fill="#6b6b6b"/>
  <path d="M22.6 -4.3V4.3" stroke="#6b6b6b" stroke-width="1.5"/>
 </g>
</svg>
<!-- eye -->
<svg class="abs" style="left:524px;top:58px" width="24" height="16" viewBox="0 0 24 16">
 <path d="M1 8.3Q6 1.3 12 1.3Q18 1.3 22.9 8.3Q18 15.3 12 15.3Q6 15.3 1 8.3Z" fill="#fff"/>
 <circle cx="12" cy="8.2" r="3.4" fill="#fff" stroke="#3a3a3a" stroke-width="1.7"/>
</svg>
<!-- filter -->
<div class="abs" style="left:553px;top:56px;width:118px;height:20px;background:#333;border-radius:3px"></div>
<div class="tx" style="left:559px;top:54px;font-style:italic;color:#7c7c7c;letter-spacing:-0.19px">Add a filter...</div>
<!-- trash -->
<svg class="abs" style="left:680px;top:56px" width="16" height="20" viewBox="0 0 16 20">
 <path d="M5.8 2.8V1.3H10V2.8" fill="none" stroke="#fff" stroke-width="1.2"/>
 <rect x="1" y="2.8" width="14" height="1.9" rx="0.6" fill="#fff"/>
 <path d="M2.2 5.3H13.8L12.9 18.7H3.1Z" fill="#fff"/>
 <path d="M4.4 6.2V17M6.9 6.2V17M9.4 6.2V17M11.8 6.2V17" stroke="#424242" stroke-width="0.9" transform="translate(-0.1,0)"/>
</svg>
<!-- tag -->
<svg class="abs" style="left:709px;top:56px" width="66" height="21" viewBox="0 0 66 21"><path d="M5.8 0.1H62Q64.8 0.1 64.8 3V17.8Q64.8 20.6 62 20.6H6.2L0.1 14.6V6Z" fill="#b8904c"/></svg>
<div class="tx" style="left:718px;top:53px;letter-spacing:-0.34px;color:#a39a8c">Texture</div>

<div class="btn" style="left:679px">Ok</div>
<div class="btn" style="left:764px">Cancel</div>
</div>
</body>
</html>
